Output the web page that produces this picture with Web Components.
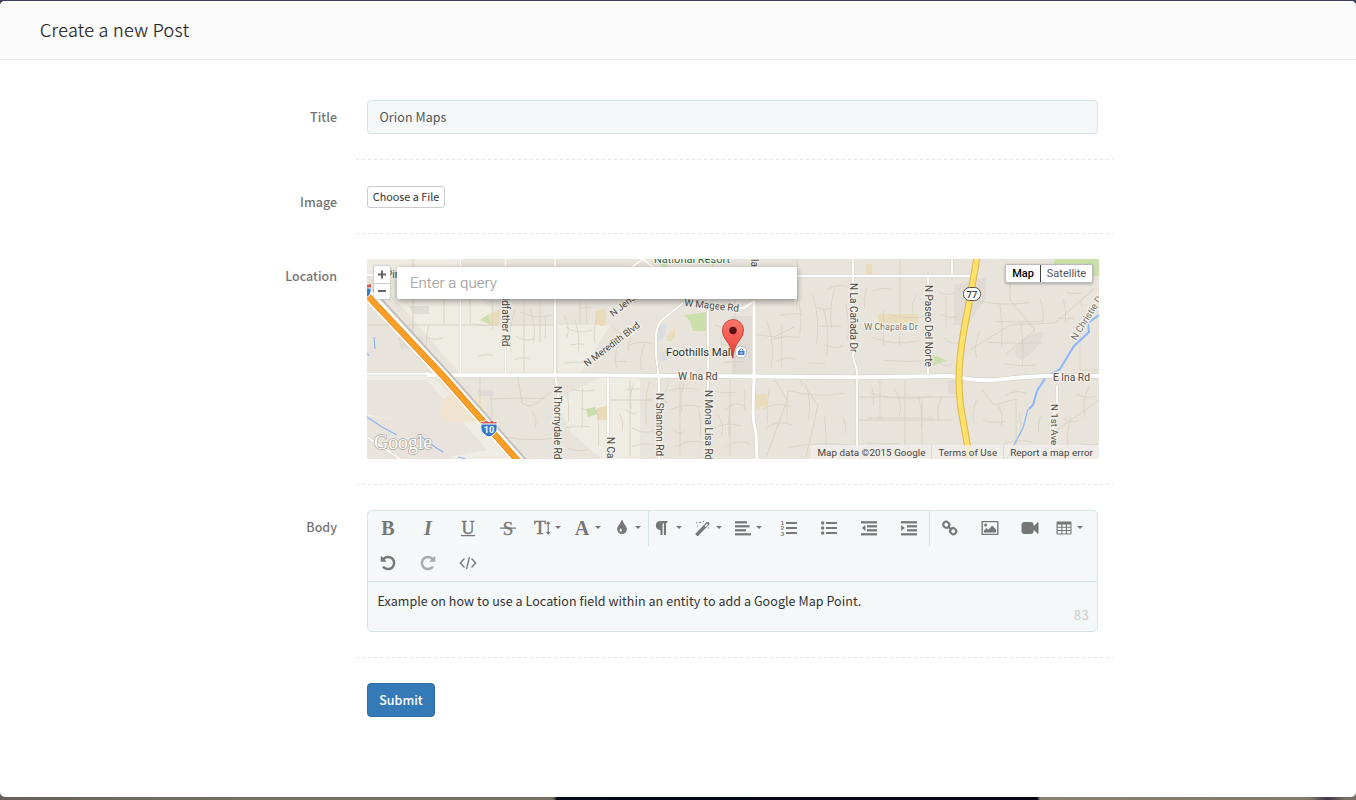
<!DOCTYPE html>
<html lang="en">
<head>
<meta charset="utf-8">
<title>Create a new Post</title>
<style>
html,body{margin:0;height:100%;overflow:hidden}
body{font-family:"Noto Sans CJK SC","Open Sans",sans-serif;font-size:12.5px;color:#333}
</style>
</head>
<body>
<post-modal heading="Create a new Post">
  <form-row label="Title"><text-field value="Orion Maps"></text-field></form-row>
  <form-row label="Image" class="image"><file-button>Choose a File</file-button></form-row>
  <form-row label="Location" class="location"><map-field></map-field></form-row>
  <form-row label="Body" class="body"><rich-editor count="83">Example on how to use a Location field within an entity to add a Google Map Point.</rich-editor></form-row>
  <form-row class="last"><submit-button>Submit</submit-button></form-row>
</post-modal>
<script>
const define = (name, render) => customElements.define(name, class extends HTMLElement {
  connectedCallback() {
    if (this.shadowRoot) return;
    const t = document.createElement('template');
    t.innerHTML = render(this);
    this.attachShadow({mode: 'open'}).append(t.content.cloneNode(true));
  }
});

define('post-modal', el => `<style>
:host{display:flex;flex-direction:column;box-sizing:border-box;height:800px;padding:1px 0 3px;
background:linear-gradient(#3d4058,#3d4058) 0 0/100% 6px no-repeat,linear-gradient(90deg,#65605a 0,#777064 240px,#777064 553px,#080a18 557px,#080614 1037px,#8b816f 1040px,#80776a 1310px,#40374a 1327px,#777064 1345px)}
.dialog{flex:1;background:#fff;border-radius:5px;overflow:hidden}
header{height:58px;box-sizing:content-box;border-bottom:1px solid #e5e5e5;background:#fbfbfb;display:flex;align-items:center;padding-left:40px}
h1{margin:0;font-weight:300;font-size:18px;line-height:28px;color:#222;letter-spacing:.33px;padding-bottom:2px;-webkit-text-stroke:.2px #222}
main{padding-top:40px}
</style><div class="dialog"><header><h1>${el.getAttribute('heading')}</h1></header><main><slot></slot></main></div>`);

define('form-row', el => `<style>
:host{display:grid;grid-template-columns:337px 761px;column-gap:15px;margin-bottom:25px}
label{text-align:right;font-weight:500;color:#737373;font-size:12.5px;line-height:20px;padding-top:7px}
.cell{padding:0 15px 26px;height:34px;background:repeating-linear-gradient(90deg,transparent 0 1px,#e2e4e4 1px 4px,transparent 4px 6px) 3px 100%/758px 1px no-repeat}
:host(.image) .cell{height:22px;padding-top:1px}
:host(.location) .cell{height:200px}
:host(.body) .cell{height:122px}
:host(.last) .cell{background:none}
</style><label>${el.getAttribute('label') || ''}</label><div class="cell"><slot></slot></div>`);

define('text-field', el => `<style>
:host{display:block}
div{height:32px;border:1px solid #d5e4e7;border-radius:4px;background:#f4f8f9;padding:0 11.5px;line-height:32px;color:#555;font-size:12.5px;letter-spacing:.06px}
</style><div>${el.getAttribute('value')}</div>`);

define('file-button', () => `<style>
:host{display:flex}
button{font:inherit;font-size:10.8px;color:#333;background:#fff;border:1px solid #ccc;border-radius:3px;width:78px;height:22px;padding:0 0 2px;line-height:18px;white-space:nowrap}
</style><button><slot></slot></button>`);

define('submit-button', () => `<style>
:host{display:flex}
button{font:inherit;font-weight:500;font-size:12.5px;color:#fff;background:#337ab7;border:1px solid #2e6da4;border-radius:4px;width:68px;height:34px;padding:0;line-height:20px}
</style><button><slot></slot></button>`);

const serif = (s, extra = '') => `<text x="10" y="16.5" text-anchor="middle" font-family="Liberation Serif,serif" font-weight="700" font-size="20" ${extra}>${s}</text>`;
const fa = (d, size = 17) => `<g transform="translate(${10 - size / 2} ${10 - size / 2}) scale(${size / 1792})"><path d="${d}"/></g>`;
const UNDO = 'M1664 896q0 156-61 298t-164 245-245 164-298 61q-172 0-327-72.5t-264-204.5q-7-10-6.5-22.5t8.5-20.5l137-138q10-9 25-9 16 2 23 12 73 95 179 147t225 52q104 0 198.5-40.5t163.5-109.5 109.5-163.5 40.5-198.5-40.5-198.5-109.5-163.5-163.5-109.5-198.5-40.5q-98 0-188 35.5t-160 101.5l137 138q31 30 14 69-17 40-59 40h-448q-26 0-45-19t-19-45v-448q0-42 40-59 39-17 69 14l130 129q107-101 244.5-156.5t284.5-55.5q156 0 298 61t245 164 164 245 61 298z';
const lines = (x, w) => [4, 8, 12, 16].map((y, i) => `<rect x="${x[i]}" y="${y - .8}" width="${w[i]}" height="2.2"/>`).join('');
const ICONS = {
  bold: serif('B'),
  italic: serif('I', 'font-style="italic"'),
  underline: `<g transform="translate(0 -1)">${serif('U', 'style="font-size:18px;font-weight:400" stroke="#777" stroke-width=".4"')}</g><path d="M3 17h14v1.3H3z"/>`,
  strike: serif('S', 'style="font-size:19px;font-weight:400" stroke="#777" stroke-width=".3"') + '<path d="M2 9.4h16v1.3H2z"/>',
  size: '<text x="2" y="16.2" font-family="Liberation Serif,serif" font-size="19.5" stroke="#777" stroke-width=".5">T</text><path d="M15.6 5h1.2v10h-1.2z"/><path d="M14 6 16.200 3l2.200 3zM14 14 16.200 17l2.200-3z"/>',
  color: serif('A'),
  tint: fa('M896 1152q0-36-20-69-1-1-15.5-22.5t-25.5-38-25-44-21-50.5q-4-16-21-16t-21 16q-7 23-21 50.5t-25 44-25.5 38-15.5 22.5q-20 33-20 69 0 53 37.5 90.5t90.5 37.5 90.5-37.5 37.5-90.5zm512-128q0 212-150 362t-362 150-362-150-150-362q0-145 81-275 6-9 62.5-90.5t101-151 99.5-178 83-201.5q9-30 34-47t51-17 51.5 17 33.5 47q28 93 83 201.5t99.5 178 101 151 62.5 90.5q81 127 81 275z'),
  para: '<g transform="translate(-1.500 0)">' + fa('M1534 189v73q0 29-18.5 61t-42.5 32q-50 0-54 1-26 6-32 31-3 11-3 64v1152q0 25-18 43t-43 18h-108q-25 0-43-18t-18-43v-1218h-143v1218q0 25-17.5 43t-43.5 18h-108q-26 0-43.5-18t-17.5-43v-496q-147-12-245-59-126-58-192-179-64-117-64-259 0-166 88-286 88-118 209-159 111-37 417-37h479q25 0 43 18t18 43z', 16.5) + '</g>',
  magic: '<path fill-rule="evenodd" d="M2.6 15.4 13.5 4.2q1-.9 2 0l.8.8q.7.8 0 1.6L5.2 17.8q-.7.7-1.4 0l-1.2-1.2q-.6-.6 0-1.2zM11.6 8l1.1 1.1 2.4-2.5-1.1-1z"/><path d="m7 2.8.4 1.1 1.1.4-1.1.4L7 5.8l-.4-1.1-1.1-.4 1.1-.4zM3.6 3.6l.3.8.8.3-.8.3-.3.8-.3-.8-.8-.3.8-.3zM10.5 2.6l.3.7.7.3-.7.3-.3.7-.3-.7-.7-.3.7-.3zM15.8 9l.3.7.7.3-.7.3-.3.7-.3-.7-.7-.3.7-.3zM4.6 7l.3.7.7.3-.7.3-.3.7-.3-.7-.7-.3.7-.3z"/>',
  align: lines([2, 2, 2, 2], [12, 14.5, 11, 16]),
  ol: '<path d="M7 4h11v2H7zM7 9h11v2H7zM7 14h11v2H7z"/><g font-family="Liberation Sans" font-weight="700" font-size="6"><text x="1.7" y="6.6">1</text><text x="1.7" y="12.2">2</text><text x="1.7" y="17.9">3</text></g>',
  ul: '<path d="M7 4h11v2H7zM7 9h11v2H7zM7 14h11v2H7z"/><circle cx="3.7" cy="5" r="1.7"/><circle cx="3.7" cy="10" r="1.7"/><circle cx="3.7" cy="15" r="1.7"/>',
  outdent: lines([2, 8, 8, 2], [16, 10, 10, 16]) + '<path d="M6.4 7.1v6L2.8 10.1z"/>',
  indent: lines([2, 8, 8, 2], [16, 10, 10, 16]) + '<path d="M2.2 7.1v6l3.6-3z"/>',
  link: '<g fill="none" stroke="#777" stroke-width="2.1" stroke-linejoin="round"><rect x="3.3" y="3.9" width="6" height="5.6" rx="2.4" transform="rotate(42 6.3 6.7)"/><rect x="10.2" y="10.4" width="6" height="5.6" rx="2.4" transform="rotate(42 13.2 13.2)"/><path d="m8 8.5 3.8 3.5"/></g>',
  image: '<path fill-rule="evenodd" d="M2.4 3h15.2q.9 0 .9.9v12.2q0 .9-.9.9H2.4q-.9 0-.9-.9V3.900q0-.9.9-.9zM2.900 4.300v11.400h14.200V4.300z"/><circle cx="5.600" cy="7" r="1.500"/><path d="M4 14.500v-2l2.500-2.500 1.700 1.700 4-4.200 3.900 4v3z"/>',
  video: fa('M1792 352v1088q0 42-39 59-13 5-25 5-27 0-45-19l-403-403v166q0 119-84.5 203.500t-203.500 84.500h-704q-119 0-203.500-84.500t-84.500-203.500v-704q0-119 84.500-203.500t203.500-84.500h704q119 0 203.500 84.500t84.500 203.500v165l403-402q18-19 45-19 12 0 25 5 39 17 39 59z'),
  table: '<path fill-rule="evenodd" d="M3.700 3.500h12.600q1.200 0 1.200 1.200v10.600q0 1.200-1.200 1.200H3.700q-1.200 0-1.200-1.200V4.700q0-1.200 1.200-1.200zM3.700 6.500v2.300h3.600V6.500zm4.700 0v2.300h3.400V6.500zm4.500 0v2.300h3.500V6.500zM3.700 9.800v2.200h3.600V9.800zm4.700 0v2.200h3.400V9.800zm4.500 0v2.200h3.500V9.800zM3.700 13v2.400h3.600V13zm4.700 0v2.400h3.400V13zm4.500 0v2.400h3.500V13z"/>',
  undo: fa(UNDO),
  redo: `<g transform="translate(20 0) scale(-1 1)" opacity=".6">${fa(UNDO)}</g>`,
  code: '<path fill="none" stroke="#777" stroke-width="1.300" d="M6.500 5.500 2.300 10l4.200 4.500M13.500 5.500l4.200 4.500-4.200 4.500M11.500 4 8.500 16"/>'
};
define('tool-button', el => `<style>
:host{display:flex;width:40px;height:35px;align-items:center;justify-content:center}
svg{width:20px;height:20px;fill:#777;flex:none;margin-left:-1px;margin-top:-1px}
i{width:0;height:0;border:3px solid transparent;border-top-color:#777;border-bottom:0;margin:-2px -1px 0 3px}
:host([menu]){justify-content:flex-start;box-sizing:border-box;padding-left:4.500px}
</style><svg viewBox="0 0 20 20">${ICONS[el.getAttribute('icon')]}</svg>${el.hasAttribute('menu') ? '<i></i>' : ''}`);

const tools = s => '<div class="group">' + s.split(' ').map(n => `<tool-button icon="${n.replace('*', '')}" ${n.endsWith('*') ? 'menu' : ''}></tool-button>`).join('') + '</div>';
define('rich-editor', el => `<style>
:host{display:block;box-sizing:border-box;height:122px;border:1px solid #d5e4e7;border-radius:5px;background:#f4f8f9;overflow:hidden}
.bar{display:flex;flex-wrap:wrap;height:70px;border-bottom:1px solid #d5e4e7}
.group{display:flex;height:35px}
.group:nth-child(2),.group:nth-child(3){border-left:1px solid #d5e4e7}
.edit{height:49px;display:flex;justify-content:space-between;padding:0 8px 0 9.500px}
p{margin:0;padding-top:9px;line-height:20px;color:#333;font-size:12.500px;letter-spacing:.063px}
small{align-self:flex-end;color:#ccc;font-size:13px;line-height:18px;padding-bottom:7px;letter-spacing:.4px}
</style><div class="bar">${tools('bold italic underline strike size* color* tint*')}${tools('para* magic* align* ol ul outdent indent')}${tools('link image video table*')}${tools('undo redo code')}</div>
<div class="edit"><p><slot></slot></p><small>${el.getAttribute('count')}</small></div>`);

/* The map artwork uses page-scale units: one unit is one pixel. */
const label = (t, x, y, size = 10, rot = 0, extra = '') => `<text transform="translate(${x} ${y}) rotate(${rot})" font-size="${size}" ${extra}>${t}</text>`;
/* Residential side streets, laid out block by block: x, y, width, height, columns, rows. */
const blocks = [[462,276,40,96,2,3],[507,276,46,96,3,4],[558,300,45,72,4,4],[560,379,45,78,3,4],[612,380,44,76,3,4],[662,382,44,74,3,4],[711,381,40,76,3,4],[760,281,44,92,3,4],[807,280,44,92,4,5],[760,381,92,76,5,4],[860,381,94,74,4,3],[858,280,68,92,4,4],[931,280,30,92,1,4],[970,290,80,84,4,4],[966,384,85,72,4,3],[1062,382,36,74,2,3],[1052,280,45,50,2,2],[400,303,58,68,1,1],[470,380,82,76,2,2],[612,320,40,50,3,3],[714,316,36,56,2,3]];
let streets = '', seed = 7;
const rnd = () => (seed = (seed * 16807) % 2147483647) / 2147483647;
for (const [x, y, w, h, c, r] of blocks) {
  for (let i = 0; i < c; i++) {
    const sx = x + (i + .5) * w / c, a = y + rnd() * h * .5, b = a + h * (.2 + rnd() * .35), k = (rnd() - .5) * 16;
    streets += `M${sx.toFixed(1)} ${a.toFixed(1)}q${k.toFixed(1)} ${((b - a) / 2).toFixed(1)} ${(k / 2).toFixed(1)} ${Math.min(b - a, y + h - a).toFixed(1)}`;
  }
  for (let j = 0; j < r; j++) {
    const sy = y + (j + .5) * h / r, a = x + rnd() * w * .5, l = Math.min(x + w - a, w * (.25 + rnd() * .5)), k = (rnd() - .5) * 20;
    streets += `M${a.toFixed(1)} ${sy.toFixed(1)}q${(l / 2).toFixed(1)} ${k.toFixed(1)} ${l.toFixed(1)} ${(k / 3).toFixed(1)}`;
  }
}
const minor = 'M460.500 259v114M505.500 259v114M555 259v117l3 14v69M608 376v83M708 300v159M928 276v98M952 259v17M797 276h174M1057 386v18l-4 12v43M367 275h26M367 437l33 22M853 259v98l4 14v88M683 303l-20 16q-7 7-7 17v20l3 22v81M623 273l20-14 10 8';
define('map-art', () => `<style>
:host{display:block}
svg{display:block;width:732px;height:200px;font-family:Roboto,sans-serif}
.lb text{fill:#4d4a45;stroke:#f3f0e9;stroke-width:2.500px;paint-order:stroke;stroke-linejoin:round}
</style><svg viewBox="367 259 732 200">
<path fill="#e8e4dc" d="M367 259h732v200H367z"/>
<path fill="#efece3" d="M367 259h93v14l45 53v48h-45l-60-70-33-30zM462 325h91v49h-91zM558 325h52l-30 49h-22zM555 400l50-25h35v84h-38l-30-25zM367 374h63l85 85h-60l-50-38-38-5z"/>
<path fill="#e8e3dc" d="M367 380h60l60 70-50 9h-10l-35-40-25-5z"/>
<path fill="#e0dbd4" d="M398 337h25v12h-22zM409 306h20v8h-16zM732 316h22v58h-22zM954 285l32-8v22l-6 8-12 18h-14zM1016 349q10-17 28-17-4 18-23 28-8-2-5-11zM948 380h10v14h-10zM478 390h15v6h-15z"/>
<path fill="#f0e4d0" d="M442 400l10-7 32 5 5 22-40 3-9-6z"/>
<path fill="#e9dcba" d="M490 314l10-5v16h-9zM595 312l11-3v16h-11zM597 408l10-2v14h-10zM755 394h12v13h-7v3h-3v-3h-2zM878 314h40v9h-40zM866 264h6v10h-6zM600 310h5v16h-5zM600 409l7-4v12l-7 4zM667 336l8-9v9l-4 5h-4z"/>
<path fill="#cadfaa" d="M480 320l9-6 2 11zM586 409l9-2 3 7-10 3zM684 315l22-3v19h-13l-3-10zM1054 259h45v17h-12l-8-4h-25zM932 355l7 2 8 4-8 2-6 3zM658 263h10l-3 5zM712 259h6l-6 8z"/>
<path fill="#dadde0" d="M659 325l8-1-2 12-7 6zM660 352l9-2 3 8-13 4z"/>
<path fill="none" stroke="#d6cfbe" stroke-width=".7" d="${streets}"/>
<path fill="none" stroke="#d8d1c1" stroke-width=".9" d="M367 325h186M413 259v70M444 273v51M480 373v30M524 273v100M540 285v58M413 324v10M517 373l5 30q10 8 22-6l10-7M610 400h42M580 275v50M735 300v75M754 334l20 3 20-10M797 259v50M900 259v60M856 397h100M856 420h97M880 380v40M905 380v78M922 400v58M970 350l40-25 45-2 40-35M1010 265v35l25 30-30 25M982 390l12 15 22-6v59M1099 400l-42 30M1080 325v45h19M775 380l12 20-20 55M800 380l18 25-12 52M630 380v76M680 380v76M730 380v76"/>
<path fill="none" stroke="#8ab2f4" stroke-width="1.100" d="M367 417l15 10 15 8M410 441l12-4 13 10 8 5M458 457l8 2M374 337l1 12M367 353l2 3"/>
<path fill="none" stroke="#8ab8fa" stroke-width="2" d="M1099 315l-11 8 1 9-15 14-14 23-14 8-9 14-4 14-4 4"/>
<path fill="none" stroke="#8ab8fa" stroke-width="1.200" d="M1028 409l-5 19-9 17-8 15"/>
<g fill="none" stroke="#d2ccc0" stroke-width="3.200"><path d="M367 373.700h60"/><path d="M427 375.300h150l120 .8 160 1.200 95-1.200q30 7 60 2l30-2h57" stroke-width="5"/></g>
<g fill="none" stroke="#d5cfc3" stroke-width="2.700"><path d="${minor}"/><path d="M680 294q12 10 28 14h36l10-7M754 301v74l-1 38q0 10 3 20l1 26" stroke-width="4"/></g>
<g fill="none" stroke="#fff" stroke-width="1.800"><path d="${minor}"/>
<path stroke-width="3" d="M680 294q12 10 28 14h36l10-7M754 301v74l-1 38q0 10 3 20l1 26"/><path stroke-width="2.200" d="M367 373.700h62"/><path stroke-width="4" d="M427 375.300h150l120 .8 160 1.200 95-1.200q30 7 60 2l30-2h57"/></g>
<path fill="none" stroke="#fff" stroke-width="11" d="M366 293l80 85 73 83"/>
<path fill="none" stroke="#c2c1be" stroke-width="2" d="M373 290l77 84 77 87"/>
<path fill="none" stroke="#e08a22" stroke-width="6.500" d="M365 293l80 85 73 83"/><path fill="none" stroke="#fa9e25" stroke-width="5.200" d="M365 293l80 85 73 83"/>
<path fill="none" stroke="#d9b64e" stroke-width="7" d="M977 258q-3 17-9 51-9 44-9 69 0 24 4 42l7 40"/><path fill="none" stroke="#ffe168" stroke-width="5" d="M977 258q-3 17-9 51-9 44-9 69 0 24 4 42l7 40"/>
<g class="lb">
${label('Pinal', 386, 278)}
${label('National Resort', 654, 263, 11, 0, 'style="fill:#286b49" textLength="76"')}
${label('oldfather Rd', 502, 292, 10, 90)}
${label('N Thornydale Rd', 554, 386, 10, 90)}
${label('N Camino', 607, 437, 10, 90)}
${label('N Shannon Rd', 656, 393, 10, 90)}
${label('N Mona Lisa Rd', 705, 390, 10, 90)}
${label('N Jensen Dr', 613, 317, 9.500, -38)}
${label('N Meredith Blvd', 587, 367, 9.500, -37)}
${label('W Magee Rd', 684, 306, 10, 6, 'textLength="55"')}
${label('W Ina Rd', 678, 379.500, 10.300, 0, 'textLength="39.500"')}
${label('Foothills Mall', 666, 356, 11.300, 0, 'style="fill:#303030"')}
${label('la', 751, 259, 10, 90)}
${label('N La Cañada Dr', 850, 283, 10, 90)}
${label('W Chapala Dr', 864, 329.500, 9.500, 0, 'style="fill:#77736c" textLength="54"')}
${label('N Paseo Del Norte', 925, 285, 10, 90)}
${label('N Christie Dr', 1076, 341, 9.500, -58, 'style="fill:#77736c"')}
${label('E Ina Rd', 1053, 380.500, 10.300, 0, 'textLength="37"')}
${label('N 1st Ave', 1051, 404, 9.700, 90)}
</g>
<g transform="translate(489 428)"><path fill="#d05b56" stroke="#fff" stroke-width=".8" d="M-8-7l3 1 2-2 3 2 3-2 2 2 3-1v4H-8z"/><path fill="#3879c6" stroke="#fff" d="M-8-4H8q1 8-3 10-3 3-5 3t-5-3Q-9 4-8-4z"/></g>
<text x="489" y="432.500" text-anchor="middle" font-size="9" font-weight="700" fill="#fff">10</text>
<path fill="#d05b56" d="M367 285l4-1v4h-4z"/><path fill="#3879c6" stroke="#fff" d="M366 288h5q1 7-5 10z"/>
<rect x="963.500" y="287.500" width="17" height="13" rx="6" fill="#fff" stroke="#55524c"/><text x="972" y="297.700" text-anchor="middle" font-size="9.500" font-weight="500" fill="#333">77</text>
<circle cx="741" cy="352" r="5.800" fill="#fff" stroke="#aeb6bd" stroke-width=".8"/><path fill="#437bd0" d="M738 351h6.500v4H738z"/><path fill="none" stroke="#437bd0" d="M739.500 351.500v-1.500q1.700-2.500 3.500 0v1.500"/><path stroke="#fff" stroke-width=".8" d="M739.500 353h3.500"/>
<defs><linearGradient id="pin" x2="0" y2="1"><stop stop-color="#ff776b"/><stop offset="1" stop-color="#e83b35"/></linearGradient></defs>
<path d="M732.500 358q0-10-7-18.500-3-4-3-9.500a10.500 10.500 0 0121 0q0 5.500-3.500 9.500-7 8.500-7 18.500z" fill="url(#pin)" stroke="#b5392f" stroke-width=".8"/><circle cx="733" cy="330.500" r="3.700" fill="#561312"/>
<text x="374" y="449" font-family="Liberation Serif,serif" font-size="20" textLength="58" lengthAdjust="spacingAndGlyphs" fill="#fff" stroke="#aaa79f" stroke-width="1.400" paint-order="stroke">Google</text>
</svg>`);

define('map-field', () => `<style>
:host{display:block;position:relative;width:732px;height:200px;overflow:hidden;font-family:Roboto,sans-serif}
.zoom,.search,.types,.legal{position:absolute;display:flex}
.zoom{left:7px;top:7px;width:16px;height:33px;flex-direction:column;background:#fff;border-radius:2px;box-shadow:0 0 2px 1px #9996}
.zoom svg{width:16px;height:17px;display:block}
.zoom svg+svg{border-top:1px solid #ccc;height:15px}
.search{left:30px;top:8px;width:400px;height:32px;box-sizing:border-box;align-items:center;padding-left:13px;background:#fff;border-radius:2px 0 0 2px;box-shadow:0 2px 6px #0006;color:#a0a0a0;font-size:15px;font-weight:300;letter-spacing:.04px;-webkit-text-stroke:.15px #a0a0a0}
.types{left:638px;top:5px;height:19px;border:1px solid #bbb;border-radius:2px;box-sizing:border-box;background:#fff;box-shadow:0 1px 3px #0004;font-size:11px;line-height:17px;color:#565656;width:88px}
.types b{font-weight:500;color:#000;width:34px;text-align:center;border-right:1px solid #444}
.types span{flex:1;text-align:center}
.legal{right:0;bottom:0;height:14px;line-height:15px;font-size:9.800px;color:#444;background:#f1eeeacc;white-space:nowrap}
.legal span{box-sizing:border-box;padding:0 6px;text-align:center;letter-spacing:.06px}
.legal span+span{border-left:1px solid #dedbd5}
</style><map-art></map-art>
<div class="zoom"><svg viewBox="0 0 16 17"><path fill="#666" d="M4 7.500h8v2H4zM7 4.500h2v8H7z"/></svg><svg viewBox="0 0 16 15"><path fill="#666" d="M4 6h8v2H4z"/></svg></div>
<div class="search">Enter a query</div>
<div class="types"><b>Map</b><span>Satellite</span></div>
<div class="legal"><span>Map data ©2015 Google</span><span>Terms of Use</span><span>Report a map error</span></div>`);
</script>
</body>
</html>
